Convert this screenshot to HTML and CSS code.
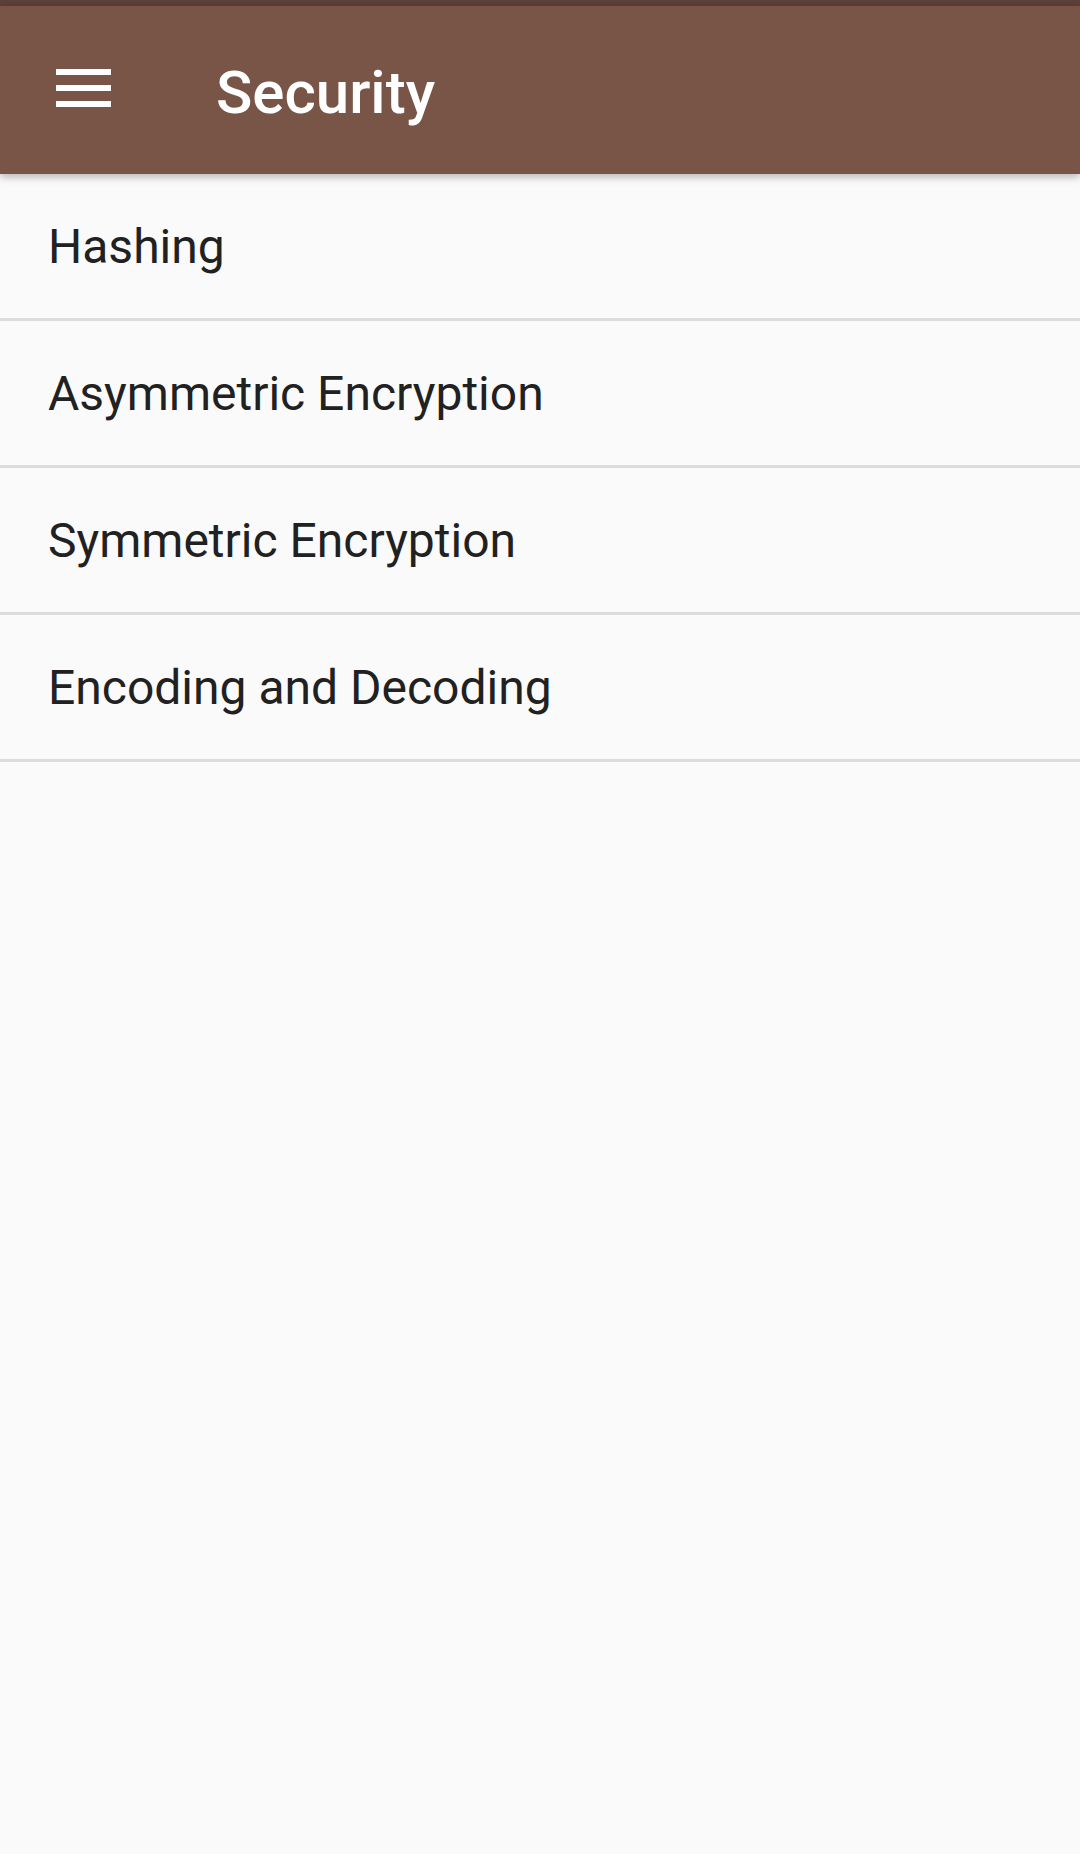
FILE: index.html
```html
<!DOCTYPE html>
<html>
<head>
<meta charset="utf-8">
<link rel="stylesheet" href="styles.css">
</head>
<body>
<div class="status"></div>
<header class="appbar">
  <svg class="menu" width="55" height="38" viewBox="0 0 55 38">
    <rect x="0" y="0" width="55" height="6" fill="#fff"/>
    <rect x="0" y="16" width="55" height="6" fill="#fff"/>
    <rect x="0" y="32" width="55" height="6" fill="#fff"/>
  </svg>
  <h1 class="title">Security</h1>
</header>
<ul class="list">
  <li class="item">Hashing</li>
  <li class="item">Asymmetric Encryption</li>
  <li class="item">Symmetric Encryption</li>
  <li class="item">Encoding and Decoding</li>
</ul>
</body>
</html>
```
FILE: styles.css
```css
html, body {
  margin: 0;
  padding: 0;
  background: #fafafa;
  font-family: Roboto, "Liberation Sans", sans-serif;
}
body {
  width: 1080px;
  height: 1854px;
  overflow: hidden;
}
.status {
  height: 6px;
  background: #5d4037;
}
.appbar {
  position: relative;
  z-index: 2;
  height: 168px;
  background: #795548;
  display: flex;
  align-items: center;
  box-shadow: 0 3px 8px rgba(0, 0, 0, 0.28);
}
.menu {
  display: block;
  margin-left: 56px;
  margin-top: -4px;
  flex: none;
}
.title {
  margin: 0 0 0 105px;
  padding-top: 5px;
  color: #fff;
  font-size: 60px;
  font-weight: 500;
  line-height: normal;
}
.list {
  list-style: none;
  margin: 0;
  padding: 0;
}
.item {
  box-sizing: border-box;
  height: 147px;
  padding: 2px 48px 0;
  border-bottom: 3px solid #dcdcdc;
  display: flex;
  align-items: center;
  font-size: 48px;
  line-height: 48px;
  color: #212121;
}
```
